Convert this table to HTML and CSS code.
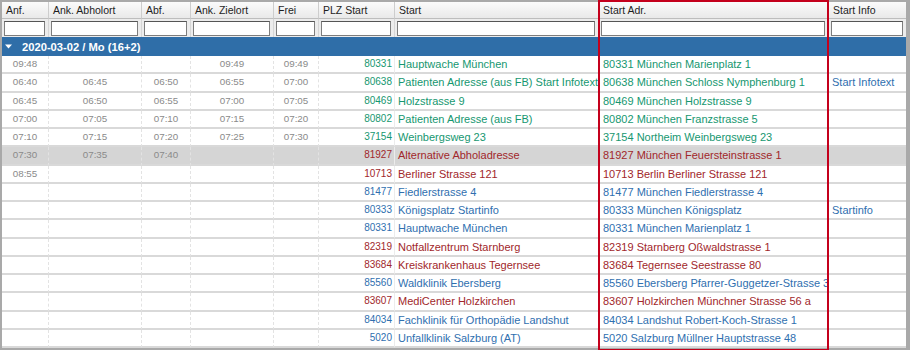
FILE: index.html
```html
<!DOCTYPE html>
<html lang="de">
<head>
<meta charset="utf-8">
<title>Fahrten</title>
<link rel="stylesheet" href="styles.css">
</head>
<body>
<div class="grid">
  <div class="scroller">
  <table class="tbl">
    <colgroup>
      <col class="c-anf"><col class="c-ank"><col class="c-abf"><col class="c-ziel"><col class="c-frei"><col class="c-plz"><col class="c-start"><col class="c-adr"><col class="c-info">
    </colgroup>
    <thead>
      <tr class="hdr">
        <th>Anf.</th><th>Ank. Abholort</th><th>Abf.</th><th>Ank. Zielort</th><th>Frei</th><th>PLZ Start</th><th>Start</th><th>Start Adr.</th><th class="last">Start Info</th>
      </tr>
      <tr class="flt">
        <td><input type="text"></td><td><input type="text"></td><td><input type="text"></td><td><input type="text"></td><td><input type="text"></td><td><input type="text"></td><td><input type="text"></td><td><input type="text"></td><td><input type="text"></td>
      </tr>
    </thead>
    <tbody>
      <tr class="grp">
        <td colspan="9"><svg class="caret" width="7" height="5" viewBox="0 0 7 5"><path d="M0 0.5h7L3.5 4.5z" fill="#fff"/></svg>2020-03-02 / Mo (16+2)</td>
      </tr>
      <tr class="row green"><td class="t">09:48</td><td class="t"></td><td class="t"></td><td class="t">09:49</td><td class="t">09:49</td><td class="plz">80331</td><td class="st">Hauptwache München</td><td class="adr">80331 München Marienplatz 1</td><td class="info"></td></tr>
      <tr class="row green"><td class="t">06:40</td><td class="t">06:45</td><td class="t">06:50</td><td class="t">06:55</td><td class="t">07:00</td><td class="plz">80638</td><td class="st">Patienten Adresse (aus FB) Start Infotext</td><td class="adr">80638 München Schloss Nymphenburg 1</td><td class="info">Start Infotext</td></tr>
      <tr class="row green"><td class="t">06:45</td><td class="t">06:50</td><td class="t">06:55</td><td class="t">07:00</td><td class="t">07:05</td><td class="plz">80469</td><td class="st">Holzstrasse 9</td><td class="adr">80469 München Holzstrasse 9</td><td class="info"></td></tr>
      <tr class="row green"><td class="t">07:00</td><td class="t">07:05</td><td class="t">07:10</td><td class="t">07:15</td><td class="t">07:20</td><td class="plz">80802</td><td class="st">Patienten Adresse (aus FB)</td><td class="adr">80802 München Franzstrasse 5</td><td class="info"></td></tr>
      <tr class="row green"><td class="t">07:10</td><td class="t">07:15</td><td class="t">07:20</td><td class="t">07:25</td><td class="t">07:30</td><td class="plz">37154</td><td class="st">Weinbergsweg 23</td><td class="adr">37154 Northeim Weinbergsweg 23</td><td class="info"></td></tr>
      <tr class="row red sel"><td class="t">07:30</td><td class="t">07:35</td><td class="t">07:40</td><td class="t"></td><td class="t"></td><td class="plz">81927</td><td class="st">Alternative Abholadresse</td><td class="adr">81927 München Feuersteinstrasse 1</td><td class="info"></td></tr>
      <tr class="row red"><td class="t">08:55</td><td class="t"></td><td class="t"></td><td class="t"></td><td class="t"></td><td class="plz">10713</td><td class="st">Berliner Strasse 121</td><td class="adr">10713 Berlin Berliner Strasse 121</td><td class="info"></td></tr>
      <tr class="row blue"><td class="t"></td><td class="t"></td><td class="t"></td><td class="t"></td><td class="t"></td><td class="plz">81477</td><td class="st">Fiedlerstrasse 4</td><td class="adr">81477 München Fiedlerstrasse 4</td><td class="info"></td></tr>
      <tr class="row blue"><td class="t"></td><td class="t"></td><td class="t"></td><td class="t"></td><td class="t"></td><td class="plz">80333</td><td class="st">Königsplatz Startinfo</td><td class="adr">80333 München Königsplatz</td><td class="info">Startinfo</td></tr>
      <tr class="row blue"><td class="t"></td><td class="t"></td><td class="t"></td><td class="t"></td><td class="t"></td><td class="plz">80331</td><td class="st">Hauptwache München</td><td class="adr">80331 München Marienplatz 1</td><td class="info"></td></tr>
      <tr class="row red"><td class="t"></td><td class="t"></td><td class="t"></td><td class="t"></td><td class="t"></td><td class="plz">82319</td><td class="st">Notfallzentrum Starnberg</td><td class="adr">82319 Starnberg Oßwaldstrasse 1</td><td class="info"></td></tr>
      <tr class="row red"><td class="t"></td><td class="t"></td><td class="t"></td><td class="t"></td><td class="t"></td><td class="plz">83684</td><td class="st">Kreiskrankenhaus Tegernsee</td><td class="adr">83684 Tegernsee Seestrasse 80</td><td class="info"></td></tr>
      <tr class="row blue"><td class="t"></td><td class="t"></td><td class="t"></td><td class="t"></td><td class="t"></td><td class="plz">85560</td><td class="st">Waldklinik Ebersberg</td><td class="adr">85560 Ebersberg Pfarrer-Guggetzer-Strasse 3</td><td class="info"></td></tr>
      <tr class="row red"><td class="t"></td><td class="t"></td><td class="t"></td><td class="t"></td><td class="t"></td><td class="plz">83607</td><td class="st">MediCenter Holzkirchen</td><td class="adr">83607 Holzkirchen Münchner Strasse 56 a</td><td class="info"></td></tr>
      <tr class="row blue"><td class="t"></td><td class="t"></td><td class="t"></td><td class="t"></td><td class="t"></td><td class="plz">84034</td><td class="st">Fachklinik für Orthopädie Landshut</td><td class="adr">84034 Landshut Robert-Koch-Strasse 1</td><td class="info"></td></tr>
      <tr class="row blue"><td class="t"></td><td class="t"></td><td class="t"></td><td class="t"></td><td class="t"></td><td class="plz">5020</td><td class="st">Unfallklinik Salzburg (AT)</td><td class="adr">5020 Salzburg Müllner Hauptstrasse 48</td><td class="info"></td></tr>
    </tbody>
  </table>
  </div>
  <div class="hl"></div>
</div>
</body>
</html>
```
FILE: styles.css
```css
html, body {
  margin: 0;
  padding: 0;
  background: #ffffff;
}
body {
  font-family: "Liberation Sans", Arial, Helvetica, sans-serif;
}
.grid {
  position: relative;
  width: 910px;
  height: 350px;
  box-sizing: border-box;
  border: 2px solid #a9a9a9;
  border-right-width: 4px;
  background: #ffffff;
}
.scroller {
  height: 346px;
  overflow: hidden;
}
.tbl {
  width: 904px;
  table-layout: fixed;
  border-collapse: separate;
  border-spacing: 0;
}
.c-anf { width: 47px; }
.c-ank { width: 93px; }
.c-abf { width: 49px; }
.c-ziel { width: 83px; }
.c-frei { width: 45px; }
.c-plz { width: 76px; }
.c-start { width: 204px; }
.c-adr { width: 230px; }
.c-info { width: 77px; }

.tbl th, .tbl td {
  padding: 0;
  white-space: nowrap;
  overflow: hidden;
}
.hdr { height: 17px; }
.hdr th {
  background: linear-gradient(#fbfbfb, #e9e9e9);
  border-right: 1px solid #cdcdcd;
  border-bottom: 1px solid #bdbdbd;
  font-weight: normal;
  font-size: 10.5px;
  color: #1e1e1e;
  text-align: left;
  padding-left: 4px;
  vertical-align: middle;
}
.hdr th.last { border-right: none; }
.flt { height: 18px; }
.flt td {
  background: #ececec;
  border-right: 1px solid #d6d6d6;
  padding: 0 3px 0 2px;
  vertical-align: middle;
}
.flt td:last-child { border-right: none; }
.flt input {
  display: block;
  width: 100%;
  height: 15px;
  box-sizing: border-box;
  margin: 0;
  padding: 0;
  border: 1px solid #7d7d7d;
  border-top-color: #555;
  background: #fff;
  border-radius: 0;
}
.grp { height: 19px; }
.grp td {
  background: #2f6ea8;
  color: #fff;
  font-weight: bold;
  font-size: 11.2px;
  vertical-align: middle;
  padding-left: 3px;
}
.caret {
  display: inline-block;
  vertical-align: middle;
  margin: -2px 10px 0 0;
}
.row { height: 18.25px; }
.row td {
  border-bottom: 2px solid #d9d9d9;
  vertical-align: middle;
  font-size: 11px;
  line-height: 14px;
}
.row td.t {
  text-align: center;
  color: #8a8a8a;
  font-size: 9.8px;
  border-right: 1px dashed #e3e3e3;
}
.row td.plz {
  text-align: right;
  font-size: 10px;
  padding-right: 2px;
  border-right: 1px solid #ececec;
}
.row td.st { padding-left: 3px; }
.row td.adr { padding-left: 4px; }
.row td.info { padding-left: 3px; color: #2f6faf; }
.green td.plz, .green td.st, .green td.adr { color: #169770; }
.red td.plz, .red td.st, .red td.adr { color: #a1272b; }
.blue td.plz, .blue td.st, .blue td.adr { color: #2f6faf; }
.sel td { background: #d5d5d5; }

.hl {
  position: absolute;
  left: 596px;
  top: -2px;
  width: 231px;
  height: 351px;
  box-sizing: border-box;
  border: 2px solid #c4001c;
  pointer-events: none;
}
```
